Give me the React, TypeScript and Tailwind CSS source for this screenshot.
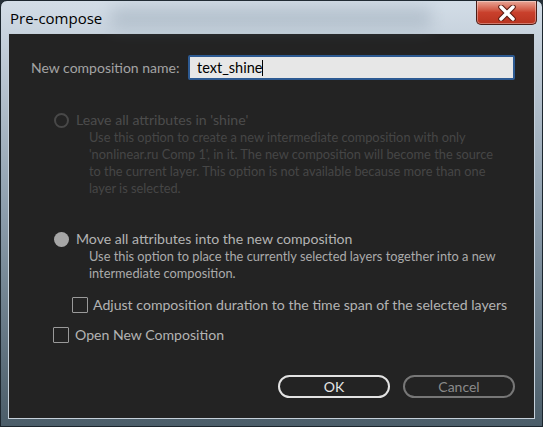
import React from 'react';

const body = { fontFamily: 'Lato, "Open Sans", sans-serif' };

function Radio({ checked, disabled }: { checked?: boolean; disabled?: boolean }) {
  if (checked) {
    return <span className="block w-[15px] h-[15px] rounded-full bg-[#a6a6a6]" />;
  }
  return (
    <span
      className={
        'block w-[15px] h-[15px] rounded-full border-2 ' +
        (disabled ? 'border-[#484848]' : 'border-[#a6a6a6]')
      }
    />
  );
}

function Checkbox() {
  return <span className="block w-[16px] h-[16px] border-[1.5px] border-[#9a9a9a] rounded-[1px]" />;
}

export default function App() {
  return (
    <div className="w-[543px] h-[427px] overflow-hidden bg-[#263038]">
      <div
        className="w-[543px] h-[427px] rounded-t-[7px] border border-[#1c262e] flex flex-col bg-gradient-to-b from-[#d3dde7] via-[#8c9dac] to-[#4b5d69]"
      >
        {/* Title bar */}
        <div className="h-[32px] flex items-start justify-between relative">
          <div className="absolute left-[110px] top-[6px] w-[320px] h-[22px] bg-[#7d8f9f] opacity-30 blur-[8px]" />
          <span
            className="relative pl-[9px] pt-[8px] text-[15px] leading-[18px] text-black"
            style={{ fontFamily: '"Open Sans", "Noto Sans", sans-serif' }}
          >
            Pre-compose
          </span>
          <div className="relative mr-[5px] w-[61px] h-[24px] rounded-b-[5px] border border-t-0 border-[#4a1d16] bg-gradient-to-b from-[#e8a596] via-[#c9402c] to-[#b8331f] flex items-center justify-center shadow-[inset_0_0_0_1px_rgba(255,255,255,0.35)]">
            <svg width="22" height="16" viewBox="0 0 22 16">
              <path d="M5 2 L17 14 M17 2 L5 14" stroke="#5a1a10" strokeWidth="5.5" strokeLinecap="round" />
              <path d="M5 2 L17 14 M17 2 L5 14" stroke="#ffffff" strokeWidth="3.5" strokeLinecap="round" />
            </svg>
          </div>
        </div>

        {/* Client area */}
        <div className="flex-1 mx-[7px] mb-[7px] border border-[#c5d0da] bg-[#232323] flex flex-col" style={body}>
          {/* Name row */}
          <div className="flex items-center pl-[22px] pr-[19px] mt-[21px]">
            <span className="text-[14px] text-[#a3a3a3] w-[157px]">New composition name:</span>
            <div className="flex-1 h-[25px] border-2 border-[#2d5a92] rounded-[2px] bg-[#e7e7e7] flex items-center pl-[7px]">
              <span className="text-[14.5px] text-black leading-[18px]">text_shine</span>
              <span className="w-[1px] h-[16px] bg-black" />
            </div>
          </div>

          {/* Option 1 (disabled) */}
          <div className="mt-[31px] pl-[45px]">
            <div className="flex items-center gap-[7px] h-[18px]">
              <Radio disabled />
              <span className="text-[14.1px] text-[#4c4c4c]">Leave all attributes in 'shine'</span>
            </div>
            <p className="pl-[35px] text-[12.8px] leading-[17px] text-[#464646] whitespace-nowrap">
              Use this option to create a new intermediate composition with only
              <br />
              'nonlinear.ru Comp 1', in it. The new composition will become the source
              <br />
              to the current layer. This option is not available because more than one
              <br />
              layer is selected.
            </p>
          </div>

          {/* Option 2 */}
          <div className="mt-[33px] pl-[45px]">
            <div className="flex items-center gap-[7px] h-[18px]">
              <Radio checked />
              <span className="text-[14.1px] text-[#b3b3b3]">Move all attributes into the new composition</span>
            </div>
            <p className="pl-[35px] text-[12.8px] leading-[17px] text-[#ababab] whitespace-nowrap">
              Use this option to place the currently selected layers together into a new
              <br />
              intermediate composition.
            </p>
            <div className="mt-[14px] pl-[18px] flex items-center gap-[5px] h-[18px]">
              <Checkbox />
              <span className="text-[14.1px] text-[#b3b3b3]">Adjust composition duration to the time span of the selected layers</span>
            </div>
          </div>

          <div className="mt-[12px] pl-[44px] flex items-center gap-[6px] h-[18px]">
            <Checkbox />
            <span className="text-[14.1px] text-[#b3b3b3]">Open New Composition</span>
          </div>

          {/* Buttons */}
          <div className="mt-auto mb-[20px] pr-[19px] flex justify-end gap-[13px]">
            <button className="w-[112px] h-[23px] rounded-full border-2 border-[#e2e2e2] text-[14px] text-[#e6e6e6] flex items-center justify-center">
              OK
            </button>
            <button className="w-[112px] h-[23px] rounded-full border-2 border-[#777777] text-[14px] text-[#8a8a8a] flex items-center justify-center">
              Cancel
            </button>
          </div>
        </div>
      </div>
    </div>
  );
}
